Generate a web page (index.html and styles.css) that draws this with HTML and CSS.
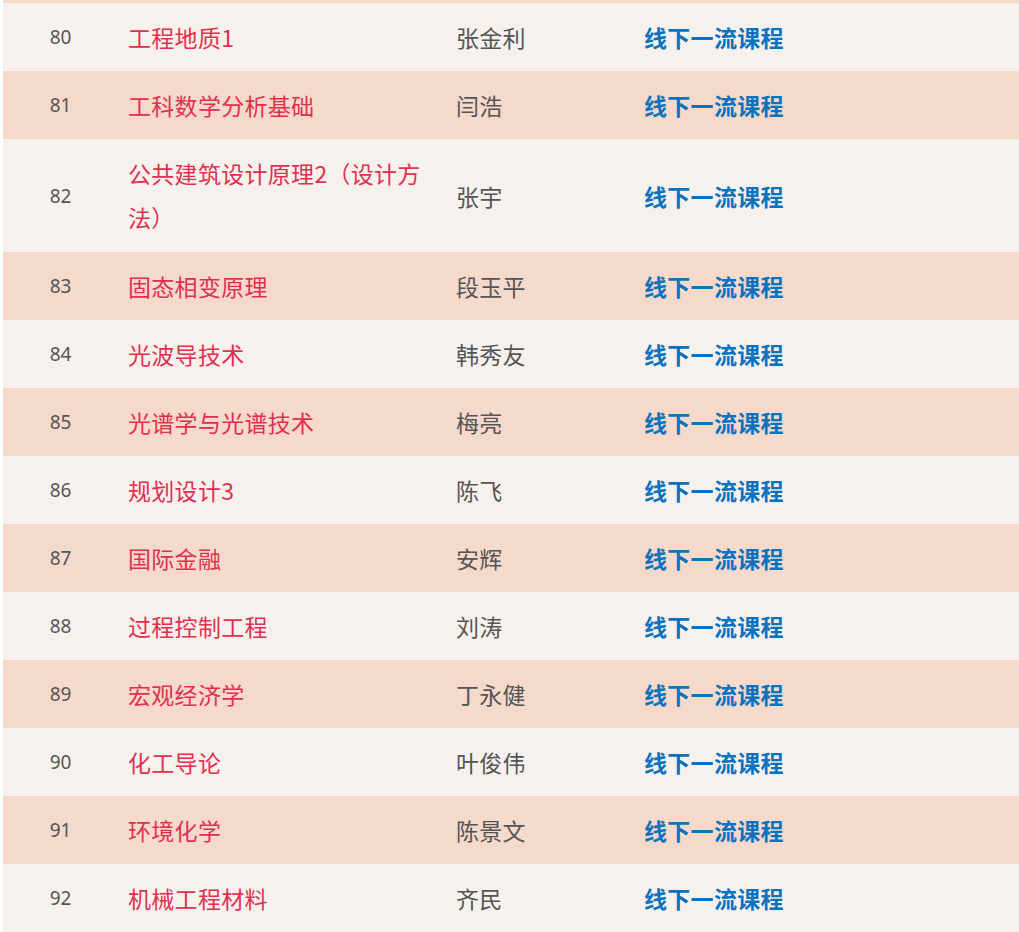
FILE: index.html
```html
<!DOCTYPE html>
<html lang="zh">
<head>
<meta charset="utf-8">
<title>课程列表</title>
<link rel="stylesheet" href="styles.css">
</head>
<body>
<div class="wrap">
<table class="courses">
<colgroup><col class="c1"><col class="c2"><col class="c3"><col class="c4"></colgroup>
<tbody>
<tr><td class="num">80</td><td class="name">工程地质1</td><td class="teacher">张金利</td><td class="type">线下一流课程</td></tr>
<tr><td class="num">81</td><td class="name">工科数学分析基础</td><td class="teacher">闫浩</td><td class="type">线下一流课程</td></tr>
<tr class="tall"><td class="num">82</td><td class="name">公共建筑设计原理2（设计方法）</td><td class="teacher">张宇</td><td class="type">线下一流课程</td></tr>
<tr><td class="num">83</td><td class="name">固态相变原理</td><td class="teacher">段玉平</td><td class="type">线下一流课程</td></tr>
<tr><td class="num">84</td><td class="name">光波导技术</td><td class="teacher">韩秀友</td><td class="type">线下一流课程</td></tr>
<tr><td class="num">85</td><td class="name">光谱学与光谱技术</td><td class="teacher">梅亮</td><td class="type">线下一流课程</td></tr>
<tr><td class="num">86</td><td class="name">规划设计3</td><td class="teacher">陈飞</td><td class="type">线下一流课程</td></tr>
<tr><td class="num">87</td><td class="name">国际金融</td><td class="teacher">安辉</td><td class="type">线下一流课程</td></tr>
<tr><td class="num">88</td><td class="name">过程控制工程</td><td class="teacher">刘涛</td><td class="type">线下一流课程</td></tr>
<tr><td class="num">89</td><td class="name">宏观经济学</td><td class="teacher">丁永健</td><td class="type">线下一流课程</td></tr>
<tr><td class="num">90</td><td class="name">化工导论</td><td class="teacher">叶俊伟</td><td class="type">线下一流课程</td></tr>
<tr><td class="num">91</td><td class="name">环境化学</td><td class="teacher">陈景文</td><td class="type">线下一流课程</td></tr>
<tr><td class="num">92</td><td class="name">机械工程材料</td><td class="teacher">齐民</td><td class="type">线下一流课程</td></tr>
</tbody>
</table>
</div>
</body>
</html>
```
FILE: styles.css
```css
html, body {
  margin: 0;
  padding: 0;
  background: #ffffff;
}
body {
  font-family: "Noto Sans CJK SC", "Noto Sans", sans-serif;
}
.wrap {
  margin-left: 3px;
  border-top: 3px solid #f5d9cb;
}
.courses {
  width: 1016px;
  border-collapse: collapse;
  table-layout: fixed;
}
.c1 { width: 115px; }
.c2 { width: 328px; }
.c3 { width: 188px; }
.c4 { width: 385px; }
.courses td {
  padding: 12px 10px;
  line-height: 44px;
  font-size: 23px;
  letter-spacing: 0.3px;
  vertical-align: middle;
}
.courses tr.tall td.name {
  padding-bottom: 13px;
}
.courses tr:nth-child(odd) td { background: #f7f1ee; }
.courses tr:nth-child(even) td { background: #f5d9cb; }
.courses td.num {
  text-align: center;
  font-family: "Noto Sans", "Open Sans", sans-serif;
  font-size: 19px;
  letter-spacing: 0;
  color: #555555;
  padding-left: 0;
  padding-right: 0;
}
.courses td.name { color: #e0304f; }
.courses td.teacher { color: #555555; }
.courses td.type { color: #0b72bd; font-weight: bold; }
```
